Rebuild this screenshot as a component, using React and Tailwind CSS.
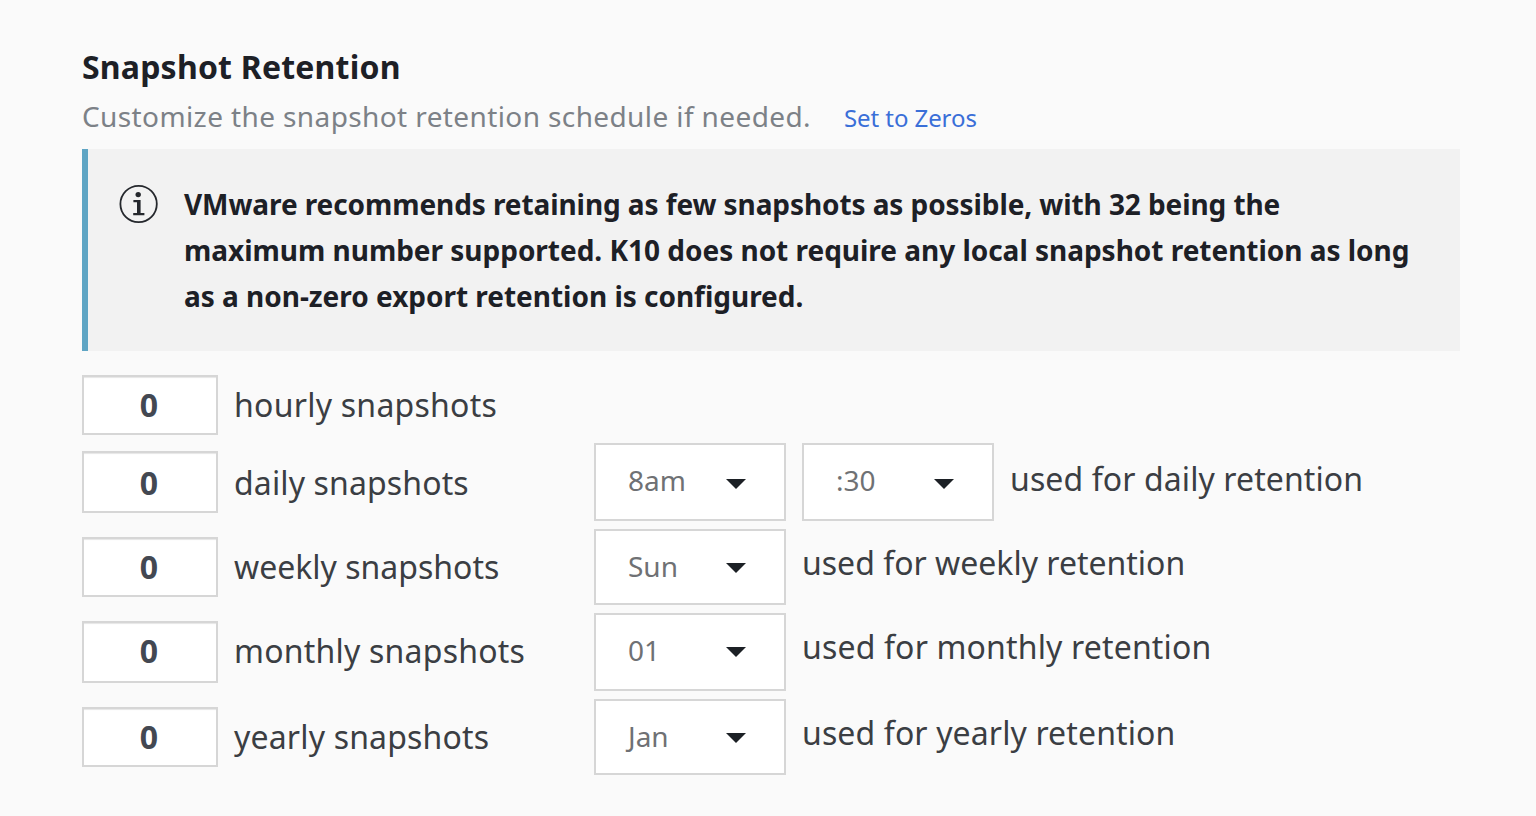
function InfoIcon() {
  return (
    <svg className="mt-[35px] h-10 w-10 shrink-0" viewBox="0 0 40 40" fill="none">
      <circle cx="19.6" cy="20" r="18.2" stroke="#25282d" strokeWidth="1.8" />
      <circle cx="19.2" cy="10.6" r="2.7" fill="#25282d" />
      <path d="M14.4 16h7.2v13h3.8v2.2H14.2V29h3.8V18.2h-3.6z" fill="#25282d" />
    </svg>
  );
}

function NumberField({ size }) {
  return (
    <div className={`flex w-[136px] shrink-0 items-center justify-center border-2 border-[#d6d6d6] bg-white pr-[2px] shadow-[inset_0_2px_1px_-1px_rgba(0,0,0,0.1)] ${size} text-[32px] leading-none font-bold text-[#434852]`}>
      <span>0</span>
    </div>
  );
}

function Select({ value, arrow }) {
  return (
    <div className="flex h-full w-48 shrink-0 border-2 border-[#d6d6d6] bg-white pl-8">
      <span className="mt-[17px] w-[98px] text-[28px] leading-9 text-[#6f7174]">{value}</span>
      <svg className={`h-[10px] w-5 ${arrow}`} viewBox="0 0 20 10">
        <path d="M0 0h20L10 10z" fill="#1c2025" />
      </svg>
    </div>
  );
}

const rows = [
  { name: "daily", row: "h-[78px]", field: "h-[62px] pt-[2px]", text: "mt-[10px] tracking-[0.13px]", arrow: "mt-[34px]", used: "mt-[14px] tracking-[0.1px]", values: ["8am", ":30"] },
  { name: "weekly", row: "h-[76px]", field: "h-[60px]", text: "mt-2 tracking-normal", arrow: "mt-[32px]", used: "mt-3 tracking-normal", values: ["Sun"] },
  { name: "monthly", row: "h-[78px]", field: "h-[62px] pb-[2px]", text: "mt-2 tracking-[0.22px]", arrow: "mt-[32px]", used: "mt-3 tracking-[0.16px]", values: ["01"] },
  { name: "yearly", row: "h-[76px]", field: "h-[60px]", text: "mt-2 tracking-[0.17px]", arrow: "mt-[32px]", used: "mt-3 tracking-[0.12px]", values: ["Jan"] },
];

export default function App() {
  return (
    <main className="h-[816px] w-[1536px] overflow-hidden bg-[#fafafa] pl-[82px] font-['Noto_Sans',sans-serif] whitespace-nowrap">
      <h2 className="pt-[45px] text-[32px] leading-[44px] font-bold tracking-[0.2px] text-[#1d2026]">Snapshot Retention</h2>
      <div className="mt-[7px] flex h-[53px] items-baseline">
        <p className="w-[762px] text-[28px] leading-10 tracking-[0.39px] text-[#7c8187]">Customize the snapshot retention schedule if needed.</p>
        <a className="text-[24px] leading-10 tracking-[-0.08px] text-[#3a6fd8]">Set to Zeros</a>
      </div>
      <section className="flex h-[202px] w-[1378px] border-l-[6px] border-[#5fa5c4] bg-[#f2f2f2] pl-[31px]">
        <InfoIcon />
        <p className="mt-8 ml-[25px] text-[28px] leading-[46px] font-bold tracking-[-0.02px] text-[#1d2026]">
          <span className="tracking-[-0.085px]">VMware recommends retaining as few snapshots as possible, with 32 being the</span>
          <br />
          maximum number supported. K10 does not require any local snapshot retention as long
          <br />
          as a non-zero export retention is configured.
        </p>
      </section>
      <div className="mt-6 flex h-[60px]">
        <NumberField size="h-[60px]" />
        <span className="mt-2 ml-4 text-[32px] leading-[44px] tracking-[0.25px] text-[#3b3e43]">hourly snapshots</span>
      </div>
      <div className="mt-2 flex flex-col gap-2">
        {rows.map((r) => (
          <div key={r.name} className={`flex ${r.row}`}>
            <div className="flex w-[512px] shrink-0 pt-2">
              <NumberField size={r.field} />
              <span className={`${r.text} ml-4 text-[32px] leading-[44px] text-[#3b3e43]`}>{r.name} snapshots</span>
            </div>
            <div className="flex gap-4">
              {r.values.map((v) => (
                <Select key={v} value={v} arrow={r.arrow} />
              ))}
              <span className={`${r.used} text-[32px] leading-[44px] text-[#3b3e43]`}>used for {r.name} retention</span>
            </div>
          </div>
        ))}
      </div>
    </main>
  );
}
